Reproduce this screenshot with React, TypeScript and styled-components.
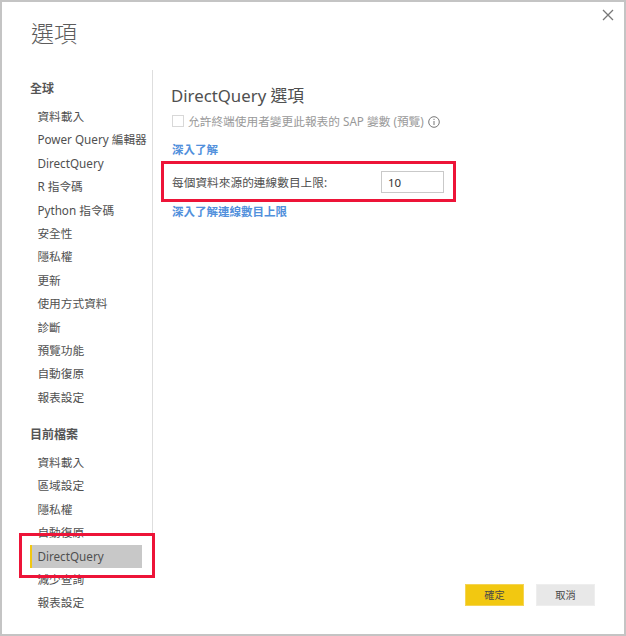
import React from "react";
import styled, { createGlobalStyle } from "styled-components";

const GlobalStyle = createGlobalStyle`
  * { box-sizing: border-box; }
  body { margin: 0; background: #fff; }
`;

const Dialog = styled.div`
  position: relative;
  width: 626px;
  height: 636px;
  border: 2px solid #c4c4c4;
  background: #fff;
  color: #505050;
  font-family: "Noto Sans", "Noto Sans CJK TC", sans-serif;
  font-size: 11.7px;
  overflow: hidden;
  display: flex;
  flex-direction: column;
`;

const Header = styled.header`
  display: flex;
  justify-content: space-between;
  height: 68px;
  padding: 0 10px 0 29px;
`;

const Title = styled.h1`
  margin: 14px 0 0;
  font-size: 23px;
  line-height: 34px;
  font-weight: 300;
  color: #5c5c5c;
`;

const CloseButton = styled.button`
  border: 0;
  padding: 0;
  margin-top: 7px;
  width: 12px;
  height: 12px;
  background: none;
  svg { display: block; }
`;

const Body = styled.div`
  display: flex;
  align-items: flex-start;
  height: 564px;
`;

const Sidebar = styled.nav`
  width: 151px;
  height: 464px;
  padding: 7px 0 0 28px;
  border-right: 1px solid #dedede;
`;

const Section = styled.section`
  margin-bottom: 14px;
`;

const SectionTitle = styled.h2`
  margin: 0;
  height: 28px;
  font-size: 12px;
  line-height: 24px;
  font-weight: 700;
  color: #555;
`;

const Item = styled.div<{ $active?: boolean }>`
  width: 112px;
  height: 23.4px;
  line-height: 23.4px;
  padding-left: ${({ $active }) => ($active ? 5.4 : 7.4)}px;
  border-left: ${({ $active }) => ($active ? "2px solid #f2c811" : "0")};
  background: ${({ $active }) => ($active ? "#c8c8c8" : "transparent")};
  white-space: nowrap;
`;

const Content = styled.main`
  padding-left: 18px;
  display: flex;
  flex-direction: column;
  align-items: flex-start;
`;

const ContentTitle = styled.h2`
  margin: 12px 0 0;
  font-size: 16.8px;
  line-height: 27px;
  height: 28px;
  font-weight: 400;
`;

const CheckRow = styled.label`
  display: flex;
  align-items: center;
  height: 22px;
  margin-left: 1px;
  color: #999;
  white-space: nowrap;
  line-height: 20px;
  svg { margin: 1px 0 0 4px; }
`;

const Checkbox = styled.span`
  width: 12px;
  height: 12px;
  margin-right: 4px;
  border: 1px solid #d8d8d8;
`;

const Link = styled.a<{ $top: number }>`
  margin: ${({ $top }) => $top}px 0 0 1px;
  height: 20px;
  line-height: 20px;
  font-size: 11.5px;
  font-weight: 700;
  color: #5190dc;
`;

const LimitRow = styled.div`
  display: flex;
  align-items: center;
  justify-content: space-between;
  width: 295px;
  height: 41px;
  margin: 1px 0 0 -10px;
  padding: 0 9px 0 8px;
  border: 3px solid #ed1438;
`;

const LimitInput = styled.input`
  width: 63px;
  height: 22px;
  padding: 1px 6px 0;
  border: 1px solid #c9c9c9;
  outline: 0;
  font: inherit;
  font-size: 11.5px;
  color: #333;
`;

const Highlight = styled.div`
  position: absolute;
  left: 17px;
  top: 531px;
  width: 136px;
  height: 45px;
  border: 3px solid #ed1438;
`;

const Footer = styled.footer`
  position: absolute;
  right: 29px;
  bottom: 28px;
  display: flex;
  gap: 12px;
`;

const Button = styled.button<{ $primary?: boolean }>`
  width: 59px;
  height: 22px;
  padding: 0;
  border: 1px solid ${({ $primary }) => ($primary ? "#f5d453" : "#eee")};
  background: ${({ $primary }) => ($primary ? "#f2c811" : "#e8e8e8")};
  font: inherit;
  font-size: 10.2px;
  line-height: 18px;
  color: #484848;
`;

const globalItems = ["資料載入", "Power Query 編輯器", "DirectQuery", "R 指令碼", "Python 指令碼", "安全性", "隱私權", "更新", "使用方式資料", "診斷", "預覽功能", "自動復原", "報表設定"];
const fileItems = ["資料載入", "區域設定", "隱私權", "自動復原", "DirectQuery", "減少查詢", "報表設定"];

const InfoIcon = () => (
  <svg width="12" height="12" viewBox="0 0 12 12" fill="none" stroke="#777">
    <circle cx="6" cy="6" r="5.3" />
    <path d="M6 5v4M6 2.8v1.2" />
  </svg>
);

export default function App() {
  return (
    <>
      <GlobalStyle />
      <Dialog role="dialog" lang="zh-Hant">
        <Header>
          <Title>選項</Title>
          <CloseButton aria-label="關閉">
            <svg width="12" height="12" viewBox="0 0 12 12" stroke="#777" strokeWidth="1.3">
              <path d="M1 1l10 10M11 1L1 11" />
            </svg>
          </CloseButton>
        </Header>
        <Body>
          <Sidebar>
            <Section>
              <SectionTitle>全球</SectionTitle>
              {globalItems.map((name) => <Item key={name}>{name}</Item>)}
            </Section>
            <Section>
              <SectionTitle>目前檔案</SectionTitle>
              {fileItems.map((name) => (
                <Item key={name} $active={name === "DirectQuery"}>{name}</Item>
              ))}
            </Section>
          </Sidebar>
          <Content>
            <ContentTitle>DirectQuery 選項</ContentTitle>
            <CheckRow>
              <Checkbox />
              允許終端使用者變更此報表的 SAP 變數 (預覽)
              <InfoIcon />
            </CheckRow>
            <Link $top={8}>深入了解</Link>
            <LimitRow>
              <span>每個資料來源的連線數目上限:</span>
              <LimitInput defaultValue="10" />
            </LimitRow>
            <Link $top={0}>深入了解連線數目上限</Link>
          </Content>
        </Body>
        <Highlight />
        <Footer>
          <Button $primary>確定</Button>
          <Button>取消</Button>
        </Footer>
      </Dialog>
    </>
  );
}
